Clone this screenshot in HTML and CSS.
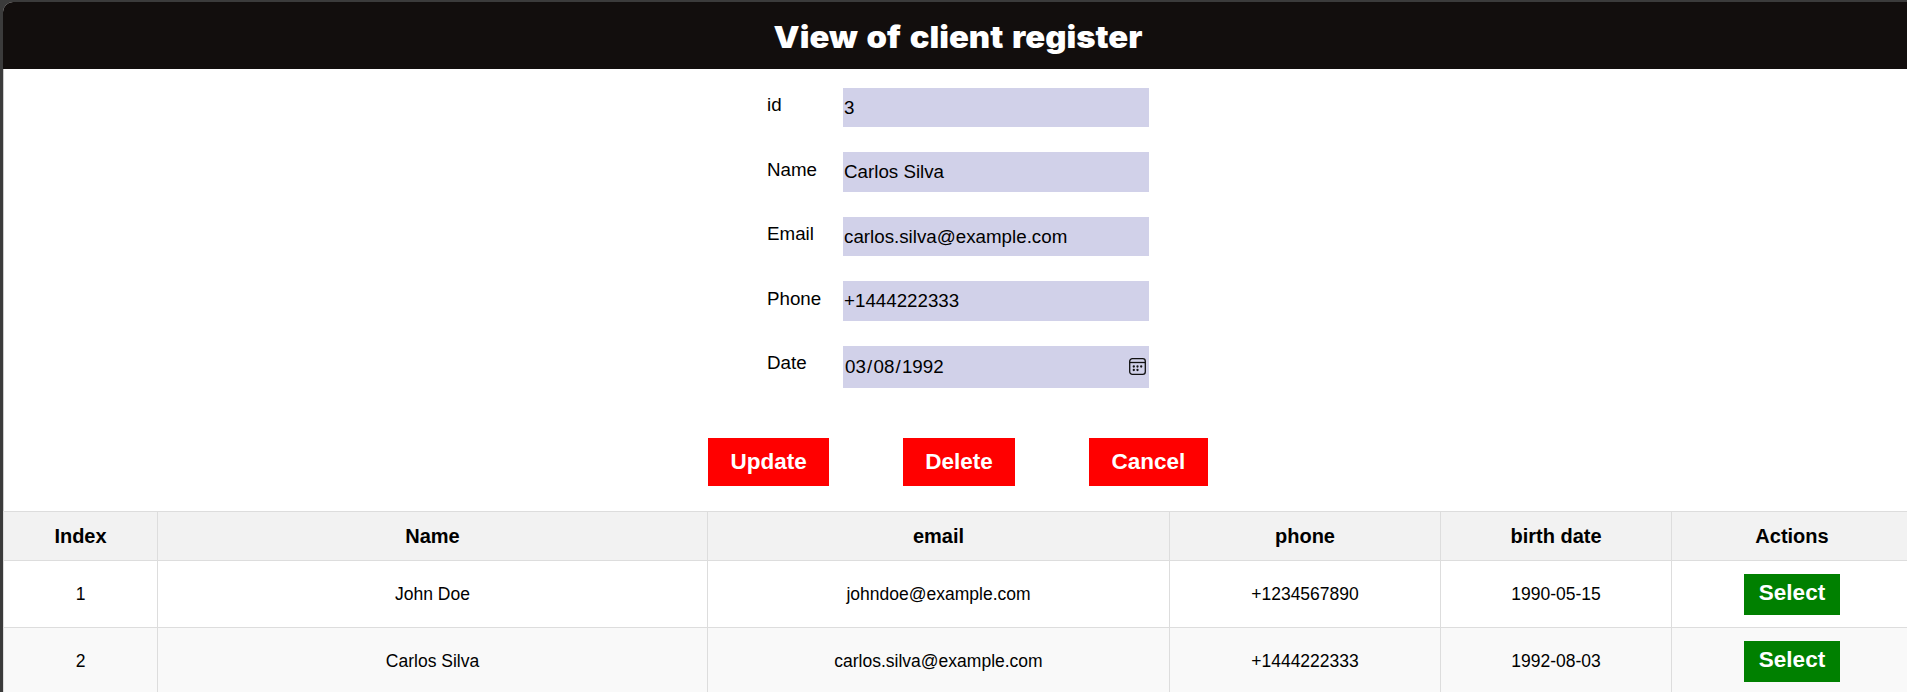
FILE: index.html
```
<!DOCTYPE html>
<html lang="en">
<head>
<meta charset="utf-8">
<title>Client register</title>
<link rel="stylesheet" href="styles.css">
</head>
<body>
<div class="page">
  <header class="header"><h1 class="title">View of client register</h1></header>
  <main class="main">
    <form class="form">
      <div class="field"><span class="label">id</span><div class="input short">3</div></div>
      <div class="field"><span class="label low">Name</span><div class="input">Carlos Silva</div></div>
      <div class="field"><span class="label">Email</span><div class="input short">carlos.silva@example.com</div></div>
      <div class="field"><span class="label low">Phone</span><div class="input">+1444222333</div></div>
      <div class="field"><span class="label">Date</span><div class="input date"><span class="date-text"><span>03</span><span>/</span><span>08</span><span>/</span><span>1992</span></span>
        <svg class="calendar" width="17" height="17" viewBox="0 0 17 17"><rect x=".7" y=".7" width="15.6" height="15.6" rx="2.6" fill="none" stroke="#111" stroke-width="1.3"/><path d="M.7 4.5h15.6" stroke="#111" stroke-width="1.3"/><g fill="#111"><circle cx="4.8" cy="8.5" r="1.15"/><circle cx="8.5" cy="8.5" r="1.15"/><circle cx="12.2" cy="8.5" r="1.15"/><circle cx="4.8" cy="12" r="1.15"/><circle cx="8.5" cy="12" r="1.15"/></g></svg></div></div>
    </form>
    <div class="actions">
      <button class="btn">Update</button>
      <button class="btn">Delete</button>
      <button class="btn">Cancel</button>
    </div>
    <table class="table">
      <colgroup><col class="c1"><col class="c2"><col class="c3"><col class="c4"><col class="c5"><col class="c6"></colgroup>
      <thead><tr><th>Index</th><th>Name</th><th>email</th><th>phone</th><th>birth date</th><th>Actions</th></tr></thead>
      <tbody>
        <tr><td>1</td><td>John Doe</td><td>johndoe@example.com</td><td>+1234567890</td><td>1990-05-15</td><td><button class="select">Select</button></td></tr>
        <tr><td>2</td><td>Carlos Silva</td><td>carlos.silva@example.com</td><td>+1444222333</td><td>1992-08-03</td><td><button class="select">Select</button></td></tr>
      </tbody>
    </table>
  </main>
</div>
</body>
</html>
```
FILE: styles.css
```
* { box-sizing: border-box; }
body {
  margin: 0;
  height: 692px;
  padding: 2px 0 0 3px;
  overflow: hidden;
  background: #3b3b3b;
  color: #000;
  font-family: "Liberation Sans", Arial, sans-serif;
  font-size: 18.75px;
}
.page {
  height: 690px;
  overflow: hidden;
  background: #fff;
  border-radius: 10px 0 0 0;
}
.header {
  height: 67px;
  background: #120e0d;
  color: #fff;
  text-align: center;
  padding-left: 6px;
}
.title {
  margin: 0;
  font-family: Inter, "Liberation Sans", sans-serif;
  font-weight: 900;
  font-size: 30px;
  line-height: 70px;
  word-spacing: 2px;
  transform: scaleX(1.095);
}
.main {
  display: flow-root;
  box-shadow: inset 1px 0 #ccc;
}
.form {
  width: 382px;
  margin: 19px 0 0 764px;
  display: grid;
  grid-template-rows: 64px 65px 64px 65px 42px;
}
.field {
  display: flex;
  align-items: flex-start;
  justify-content: space-between;
}
.label { line-height: 33px; }
.low { line-height: 35px; }
.input {
  width: 306px;
  height: 40px;
  padding-left: 1px;
  line-height: 39px;
  background: #d1d1e9;
}
.short { height: 39px; }
.date {
  height: 42px;
  line-height: 42px;
  padding: 0 3px 0 2px;
  display: flex;
  align-items: center;
  justify-content: space-between;
}
.date-text { display: flex; gap: 1.2px; }
.calendar { margin-bottom: 2px; }
.actions {
  display: flex;
  gap: 73.6px;
  margin: 50px 0 25px 704.9px;
}
.btn, .select {
  border: 0;
  border-radius: 0;
  color: #fff;
  font: bold 22.5px "Liberation Sans", Arial, sans-serif;
}
.btn {
  height: 48px;
  padding: 0 22.5px 1px;
  background: #f00;
}
.select {
  display: block;
  margin: 0 auto;
  height: 41px;
  width: 96px;
  padding: 0 0 3px;
  background: #008000;
}
.table {
  width: 1909px;
  border-collapse: collapse;
  table-layout: fixed;
}
.c1 { width: 154px; }
.c2 { width: 550px; }
.c3 { width: 462px; }
.c4 { width: 271px; }
.c5 { width: 231px; }
.c6 { width: 241px; }
.table th, .table td {
  padding: 0;
  border: 1px solid #ddd;
  text-align: center;
}
.table th {
  height: 49px;
  background: #f2f2f2;
  font-size: 20px;
}
.table td {
  height: 67px;
  font-size: 17.5px;
}
.table tbody tr:nth-child(even) { background: #f9f9f9; }
```
